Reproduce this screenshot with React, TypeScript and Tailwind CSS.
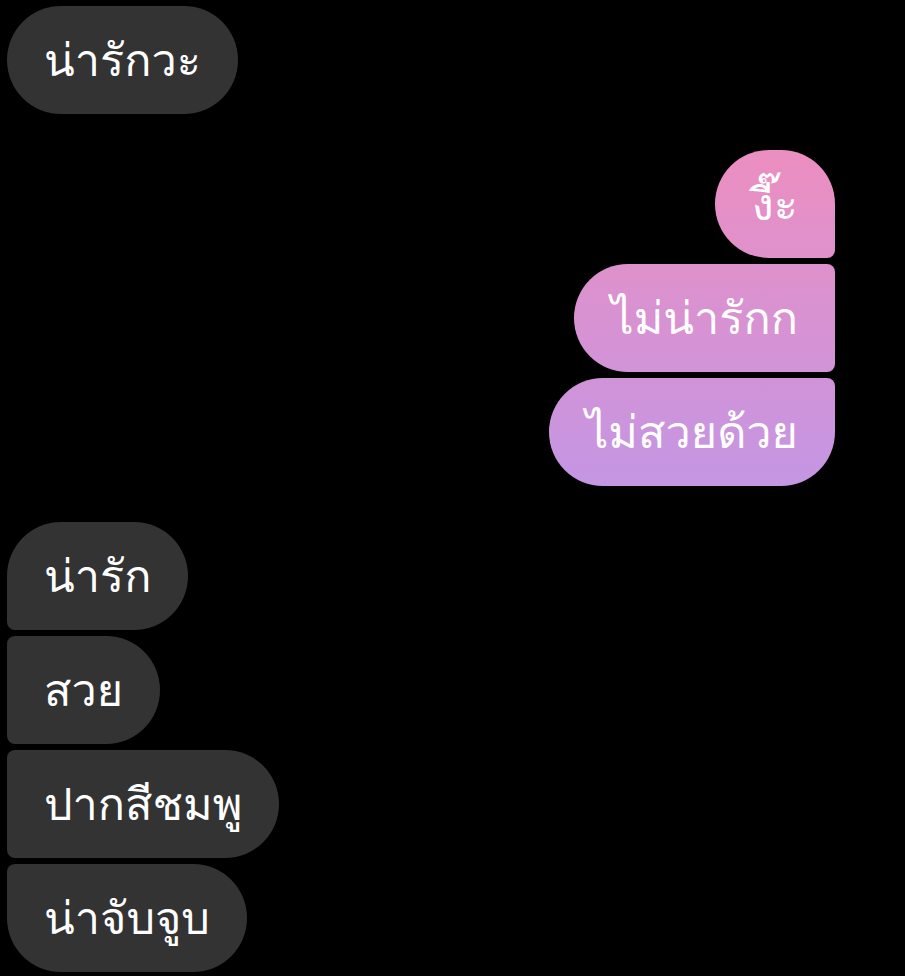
import React from "react";

type Side = "left" | "right";

interface Msg {
  text: string;
  cls: string;
}

// corners depend on where the bubble sits inside its group
const firstGroup: Msg[] = [
  { text: "น่ารักวะ", cls: "rounded-full bg-[#333333]" },
];

const rightGroup: Msg[] = [
  {
    text: "งี๊ะ",
    cls: "rounded-[54px] rounded-br-[8px] bg-gradient-to-b from-[#ec8ec0] to-[#df91cc]",
  },
  {
    text: "ไม่น่ารักก",
    cls: "rounded-l-[54px] rounded-r-[8px] bg-gradient-to-b from-[#de91cc] to-[#d293d8]",
  },
  {
    text: "ไม่สวยด้วย",
    cls: "rounded-[54px] rounded-tr-[8px] bg-gradient-to-b from-[#d193d8] to-[#c496e4]",
  },
];

const lastGroup: Msg[] = [
  { text: "น่ารัก", cls: "rounded-[54px] rounded-bl-[8px] bg-[#333333]" },
  { text: "สวย", cls: "rounded-r-[54px] rounded-l-[8px] bg-[#333333]" },
  { text: "ปากสีชมพู", cls: "rounded-r-[54px] rounded-l-[8px] bg-[#333333]" },
  { text: "น่าจับจูบ", cls: "rounded-[54px] rounded-tl-[8px] bg-[#333333]" },
];

const Bubble = ({ msg }: { msg: Msg }) => (
  <div
    className={`h-[108px] px-[37px] flex items-center text-white text-[45px] leading-none ${msg.cls}`}
  >
    <span>{msg.text}</span>
  </div>
);

const Group = ({ side, msgs }: { side: Side; msgs: Msg[] }) => (
  <div
    className={`flex flex-col gap-[6px] ${
      side === "right" ? "items-end" : "items-start"
    }`}
  >
    {msgs.map((m) => (
      <Bubble key={m.text} msg={m} />
    ))}
  </div>
);

export default function App() {
  return (
    <div
      className="w-[905px] h-[976px] overflow-hidden bg-black pl-[7px] pr-[70px] pt-[6px] flex flex-col gap-[36px]"
      style={{ fontFamily: 'Loma, "DejaVu Sans", sans-serif' }}
    >
      <Group side="left" msgs={firstGroup} />
      <Group side="right" msgs={rightGroup} />
      <Group side="left" msgs={lastGroup} />
    </div>
  );
}
